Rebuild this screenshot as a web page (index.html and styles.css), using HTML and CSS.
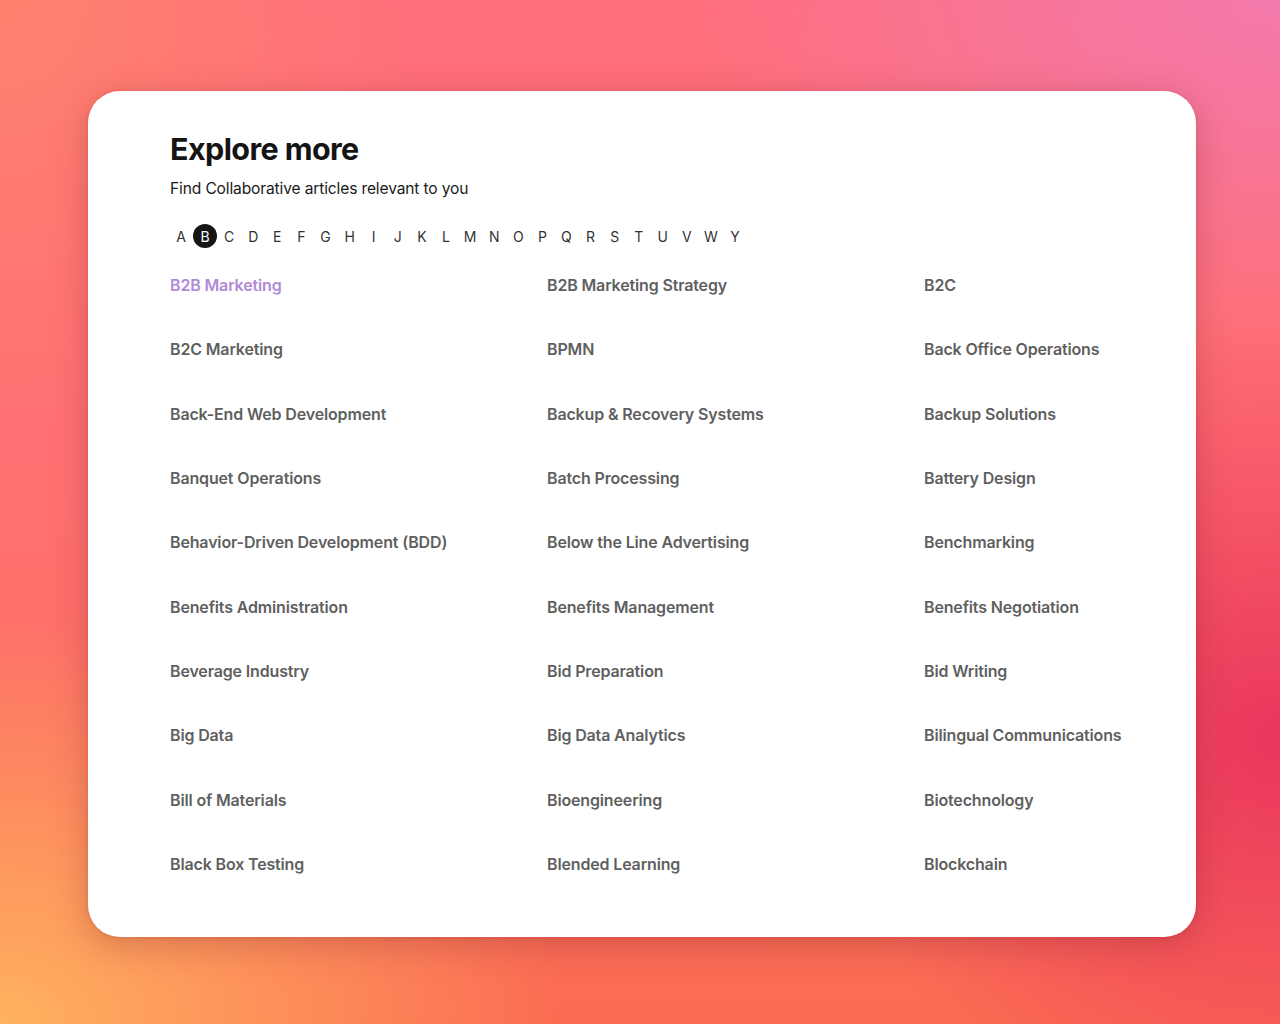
FILE: index.html
```html
<!DOCTYPE html>
<html lang="en">
<head>
<meta charset="utf-8">
<title>Explore more</title>
<link rel="stylesheet" href="styles.css">
</head>
<body>
<main class="card">
  <h1 class="title">Explore more</h1>
  <p class="subtitle">Find Collaborative articles relevant to you</p>
  <nav class="letters">
    <span class="letter">A</span>
    <span class="letter active">B</span>
    <span class="letter">C</span>
    <span class="letter">D</span>
    <span class="letter">E</span>
    <span class="letter">F</span>
    <span class="letter">G</span>
    <span class="letter">H</span>
    <span class="letter">I</span>
    <span class="letter">J</span>
    <span class="letter">K</span>
    <span class="letter">L</span>
    <span class="letter">M</span>
    <span class="letter">N</span>
    <span class="letter">O</span>
    <span class="letter">P</span>
    <span class="letter">Q</span>
    <span class="letter">R</span>
    <span class="letter">S</span>
    <span class="letter">T</span>
    <span class="letter">U</span>
    <span class="letter">V</span>
    <span class="letter">W</span>
    <span class="letter">Y</span>
  </nav>
  <ul class="topics">
    <li class="topic highlight">B2B Marketing</li>
    <li class="topic">B2B Marketing Strategy</li>
    <li class="topic">B2C</li>
    <li class="topic">B2C Marketing</li>
    <li class="topic">BPMN</li>
    <li class="topic">Back Office Operations</li>
    <li class="topic">Back-End Web Development</li>
    <li class="topic">Backup &amp; Recovery Systems</li>
    <li class="topic">Backup Solutions</li>
    <li class="topic">Banquet Operations</li>
    <li class="topic">Batch Processing</li>
    <li class="topic">Battery Design</li>
    <li class="topic">Behavior-Driven Development (BDD)</li>
    <li class="topic">Below the Line Advertising</li>
    <li class="topic">Benchmarking</li>
    <li class="topic">Benefits Administration</li>
    <li class="topic">Benefits Management</li>
    <li class="topic">Benefits Negotiation</li>
    <li class="topic">Beverage Industry</li>
    <li class="topic">Bid Preparation</li>
    <li class="topic">Bid Writing</li>
    <li class="topic">Big Data</li>
    <li class="topic">Big Data Analytics</li>
    <li class="topic">Bilingual Communications</li>
    <li class="topic">Bill of Materials</li>
    <li class="topic">Bioengineering</li>
    <li class="topic">Biotechnology</li>
    <li class="topic">Black Box Testing</li>
    <li class="topic">Blended Learning</li>
    <li class="topic">Blockchain</li>
  </ul>
</main>
</body>
</html>
```

FILE: styles.css
```css
* { box-sizing: border-box; }

html, body {
  margin: 0;
  padding: 0;
  width: 1280px;
  height: 1024px;
  overflow: hidden;
}

body {
  font-family: Inter, "Noto Sans", "Liberation Sans", sans-serif;
  background:
    radial-gradient(ellipse 650px 600px at 100% 72%, rgba(232, 48, 92, 0.9), rgba(232, 48, 92, 0) 70%),
    radial-gradient(ellipse 750px 550px at 0% 100%, rgba(255, 178, 96, 1), rgba(255, 178, 96, 0) 75%),
    radial-gradient(ellipse 550px 550px at 0% 0%, rgba(255, 132, 108, 0.9), rgba(255, 132, 108, 0) 80%),
    radial-gradient(ellipse 750px 450px at 100% 0%, rgba(243, 122, 172, 1), rgba(243, 122, 172, 0) 80%),
    linear-gradient(180deg, #ff6e7c 0%, #ff7070 50%, #fb6c52 100%);
  padding: 91px 84px 87px 88px;
}

.card {
  width: 1108px;
  height: 846px;
  background: #ffffff;
  border-radius: 32px;
  box-shadow: 0 8px 36px rgba(120, 30, 40, 0.28), 0 1px 4px rgba(120, 30, 40, 0.15);
  padding: 38px 40px 0 82px;
  display: flex;
  flex-direction: column;
}

.title {
  margin: 0;
  font-size: 30.5px;
  line-height: 40px;
  font-weight: 700;
  letter-spacing: -0.6px;
  color: #141414;
}

.subtitle {
  margin: 8px 0 0;
  font-size: 15.6px;
  line-height: 24px;
  color: #1a1a1a;
  letter-spacing: -0.15px;
}

.letters {
  margin-top: 23px;
  display: flex;
  margin-left: -1px;
}

.letter {
  width: 24.1px;
  height: 24px;
  border-radius: 50%;
  display: flex;
  align-items: center;
  justify-content: center;
  font-size: 14px;
  color: #333333;
}

.letter.active {
  width: 24px;
  background: #151515;
  color: #ffffff;
}

.topics {
  list-style: none;
  margin: 5px 0 0;
  padding: 0;
  display: grid;
  grid-template-columns: 377px 377px auto;
  grid-auto-rows: 64.3px;
}

.topic {
  display: flex;
  align-items: center;
  font-size: 16px;
  font-weight: 600;
  color: #5f5f5f;
  letter-spacing: -0.15px;
}

.topic.highlight {
  color: #b08ad6;
}
```
